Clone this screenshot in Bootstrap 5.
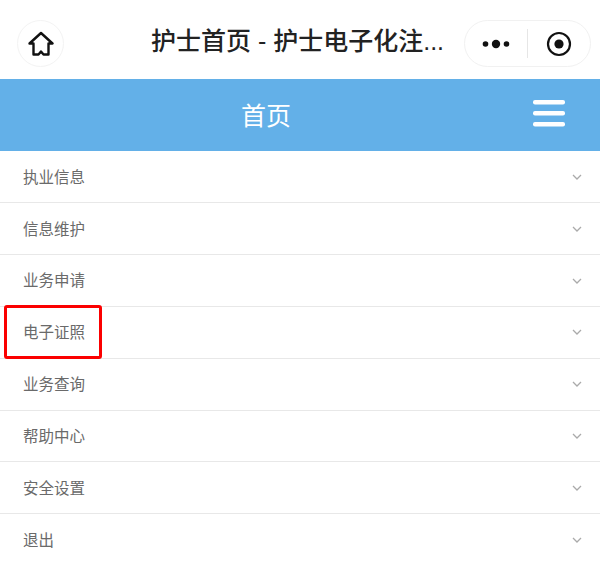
<!DOCTYPE html>
<html lang="zh-CN">
<head>
  <meta charset="UTF-8">
  <title>护士首页</title>
  <link href="https://cdn.jsdelivr.net/npm/bootstrap@5.3.3/dist/css/bootstrap.min.css" rel="stylesheet">
  <style>
    body {
      font-family: "Liberation Sans", "Noto Sans CJK SC", sans-serif;
      background-color: #fff;
      overflow: hidden;
    }
    .mini-bar {
      height: 79px;
      padding: 20px 9px 0 17px;
    }
    .home-btn {
      width: 47px;
      height: 47px;
      border: 1px solid #f3f3f3;
      border-radius: 50%;
    }
    .mini-title {
      flex: 1;
      padding-left: 87px;
      margin-top: -2px;
      font-size: 25px;
      font-weight: 500;
      line-height: 47px;
      color: #222;
      white-space: nowrap;
    }
    .capsule {
      width: 127px;
      height: 47px;
      border: 1px solid #f1f1f1;
      border-radius: 24px;
    }
    .capsule-line {
      width: 1px;
      height: 29px;
      background-color: #e6e6e6;
    }
    .capsule-side {
      width: 63px;
    }
    .page-head {
      height: 72px;
      padding: 3px 68px 0 0;
      background-color: #63b0e8;
      color: #fff;
      font-size: 25px;
    }
    .menu-icon {
      right: 35px;
      top: 20px;
    }
    .menu-list {
      padding-top: 0.6px;
    }
    .menu-row {
      height: 51.8px;
      padding: 1px 18px 0 23px;
      border-color: #e8e8e8;
      color: #6a6a6a;
      font-size: 15.5px;
    }
    .red-mark {
      left: 4px;
      top: -2px;
      width: 98px;
      height: 54px;
      border: 3px solid #fb0000;
      border-radius: 3px;
    }
  </style>
</head>
<body>
  <div class="mini-bar d-flex align-items-start">
    <div class="home-btn d-flex align-items-center justify-content-center">
      <svg width="26" height="26" viewBox="0 0 26 26" fill="none" stroke="#111" stroke-width="2.4" stroke-linejoin="round">
        <path d="M13 2 L24.5 12.5 H20.5 V23.5 H15.5 L13 20.5 L10.5 23.5 H5.5 V12.5 H1.5 Z"/>
      </svg>
    </div>
    <div class="mini-title">护士首页 - 护士电子化注...</div>
    <div class="capsule d-flex align-items-center">
      <div class="capsule-side d-flex align-items-center justify-content-center">
        <svg width="28" height="12" viewBox="0 0 28 12" fill="#111">
          <circle cx="3.5" cy="6" r="2.8"/>
          <circle cx="14" cy="6" r="4.2"/>
          <circle cx="24.5" cy="6" r="2.8"/>
        </svg>
      </div>
      <div class="capsule-line"></div>
      <div class="capsule-side d-flex align-items-center justify-content-center">
        <svg width="26" height="26" viewBox="0 0 26 26">
          <circle cx="13" cy="13" r="11" fill="none" stroke="#111" stroke-width="2.2"/>
          <circle cx="13" cy="13" r="4.6" fill="#111"/>
        </svg>
      </div>
    </div>
  </div>

  <div class="page-head position-relative d-flex align-items-center justify-content-center">
    <span>首页</span>
    <svg class="menu-icon position-absolute" width="32" height="28" viewBox="0 0 32 28" fill="#fff">
      <rect x="0" y="1" width="32" height="4.4" rx="2"/>
      <rect x="0" y="12" width="32" height="4.4" rx="2"/>
      <rect x="0" y="23" width="32" height="4.4" rx="2"/>
    </svg>
  </div>

  <div class="menu-list list-group list-group-flush" id="menu-list"></div>

  <script>
    const items = ["执业信息", "信息维护", "业务申请", "电子证照", "业务查询", "帮助中心", "安全设置", "退出"];
    const menuList = document.getElementById("menu-list");

    items.forEach(name => {
      const row = document.createElement("div");
      row.className = "list-group-item menu-row position-relative d-flex align-items-center justify-content-between";
      row.innerHTML = `
        <span>${name}</span>
        <svg width="10" height="7" viewBox="0 0 10 7" fill="none" stroke="#aaa" stroke-width="1.3"><path d="M1 1 L5 5 L9 1"/></svg>
      `;
      if (name === "电子证照") {
        const mark = document.createElement("div");
        mark.className = "red-mark position-absolute";
        row.appendChild(mark);
      }
      menuList.appendChild(row);
    });
  </script>
  <script src="https://cdn.jsdelivr.net/npm/bootstrap@5.3.3/dist/js/bootstrap.bundle.min.js"></script>
</body>
</html>
